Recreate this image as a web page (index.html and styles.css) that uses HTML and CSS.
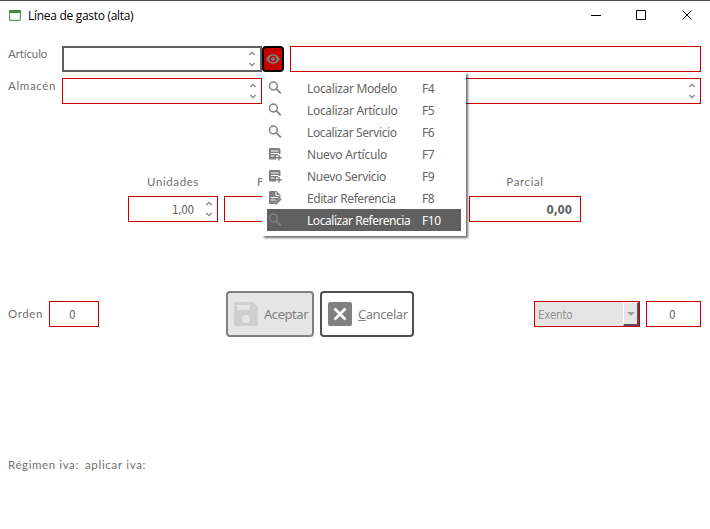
FILE: index.html
```html
<!DOCTYPE html>
<html lang="es">
<head>
<meta charset="utf-8">
<title>Línea de gasto (alta)</title>
<link rel="stylesheet" href="styles.css">
</head>
<body>
<svg class="defs" width="0" height="0">
  <symbol id="search" viewBox="0 0 14 14"><circle cx="5.400" cy="5" r="3.900" fill="none" stroke="currentColor" stroke-width="1.500"/><path d="M8.300 7.900l4.500 4.500" stroke="currentColor" stroke-width="1.800"/></symbol>
  <symbol id="note" viewBox="0 0 14 14"><path fill="currentColor" d="M2 1h9q1.500 0 1.500 1.500V7H10v1.500H8V12.500H2q-1 0-1-1V2q0-1 1-1z"/><path d="M3 4h7.500M3 6.500h7.500M3 9h3.500" stroke="#fff"/><path d="M11 8v5.500M8.200 10.800h5.600" stroke="currentColor" stroke-width="1.500"/></symbol>
  <symbol id="edit" viewBox="0 0 14 14"><path fill="currentColor" d="M2 0h6.500l4 4v2.500L6.500 12.500V13H2q-1 0-1-1V1q0-1 1-1z"/><path d="M8 1v3.500h3.500M3 6.500h7M3 9h4.500" fill="none" stroke="#fff"/><path d="M7.300 13.200l5.700-5.500" stroke="currentColor" stroke-width="2"/></symbol>
  <symbol id="spin" viewBox="0 0 8 18"><path d="M1.300 5L4 2.300 6.700 5M1.300 13L4 15.700 6.700 13" fill="none" stroke="#858585" stroke-width="1.300"/></symbol>
</svg>
<main class="window">
  <header class="titlebar">
    <svg class="app-icon" viewBox="0 0 12 11"><path fill="none" stroke="#388e3c" d="M.7 1v9.300h10.600V1"/><path fill="#388e3c" d="M0 0h12v3H0z"/></svg>
    <h1>Línea de gasto (alta)</h1>
    <svg class="controls" viewBox="0 0 102 12"><path d="M0 5.500h10M45.500 .5h9v9h-9zM91.500 .5l9 9M100.500 .5l-9 9" fill="none" stroke="#000"/></svg>
  </header>
  <section class="line first">
    <label class="t-art">Artículo</label>
    <div class="field code focused"><svg class="spin"><use href="#spin"/></svg></div>
    <button class="eye"><svg viewBox="0 0 14 10"><path fill="#777" fill-rule="evenodd" d="M0 5q2-4.700 7-4.700T14 5q-2 4.700-7 4.700T0 5zm3.700 0a3.300 3.300 0 1 0 6.600 0a3.300 3.300 0 1 0-6.600 0"/><circle cx="7" cy="5" r="2" fill="#777"/></svg></button>
    <div class="field wide"></div>
    <div class="menu">
      <div class="item"><svg><use href="#search"/></svg><span class="m1">Localizar Modelo</span><kbd>F4</kbd></div>
      <div class="item"><svg><use href="#search"/></svg><span class="m2">Localizar Artículo</span><kbd>F5</kbd></div>
      <div class="item"><svg><use href="#search"/></svg><span class="m3">Localizar Servicio</span><kbd>F6</kbd></div>
      <div class="item"><svg><use href="#note"/></svg><span class="m4">Nuevo Artículo</span><kbd>F7</kbd></div>
      <div class="item"><svg><use href="#note"/></svg><span class="m5">Nuevo Servicio</span><kbd>F9</kbd></div>
      <div class="item"><svg><use href="#edit"/></svg><span class="m6">Editar Referencia</span><kbd>F8</kbd></div>
      <div class="item selected"><svg><use href="#search"/></svg><span class="m7">Localizar Referencia</span><kbd>F10</kbd></div>
    </div>
  </section>
  <section class="line">
    <label class="t-alm">Almacén</label>
    <div class="field code"><svg class="spin"><use href="#spin"/></svg></div>
    <div class="field wide after"><svg class="spin"><use href="#spin"/></svg></div>
  </section>
  <section class="amounts">
    <div class="amount units"><label>Unidades</label><div class="field"><span>1,00</span><svg class="spin"><use href="#spin"/></svg></div></div>
    <div class="amount price"><label>F</label><div class="field"></div></div>
    <div class="amount total"><label>Parcial</label><div class="field"><span>0,00</span></div></div>
  </section>
  <section class="actions">
    <label>Orden</label><div class="field order"><span>0</span></div>
    <div class="buttons">
      <button class="accept"><svg viewBox="0 0 24 24"><path fill="#cfcfcf" fill-rule="evenodd" d="M2 0h17l5 5v17q0 2-2 2H2q-2 0-2-2V2q0-2 2-2zm1 3v5h13V3zm9 10a4 4 0 1 0 0 8a4 4 0 1 0 0-8"/></svg><span>Aceptar</span></button>
      <button class="cancel"><svg viewBox="0 0 24 24"><rect width="24" height="24" rx="2" fill="#808080"/><path d="M6.500 6.500l11 11M17.500 6.500l-11 11" stroke="#fff" stroke-width="2.700"/></svg><span><u>C</u>ancelar</span></button>
    </div>
    <div class="field select"><span>Exento</span><i><svg viewBox="0 0 8 4"><path d="M0 0h8L4 4z" fill="#a0a0a0"/></svg></i></div>
    <div class="field rate"><span>0</span></div>
  </section>
  <footer><span class="t-reg">Régimen iva:</span><span class="t-apl">aplicar iva:</span></footer>
</main>
</body>
</html>
```

FILE: styles.css
```css
* { box-sizing: border-box; }
body { margin: 0; background: #fff; color: #666; font: 12px/16px "Noto Sans", sans-serif; }
.defs { position: absolute; }
svg { display: block; flex: none; }
.window { width: 710px; height: 529px; border-top: 1px solid #505050; overflow: hidden; }
.titlebar { display: flex; align-items: center; height: 29px; padding: 0 17px 0 9px; }
.app-icon { width: 12px; height: 11px; margin-right: 7px; }
h1 { margin: 0; padding-top: 1px; font: 12px/16px "Open Sans", sans-serif; color: #000; letter-spacing: -.3px; white-space: nowrap; }
.controls { width: 102px; height: 12px; margin-left: auto; }
label, footer { font: 11.5px/16px "Century Gothic", "Lato", sans-serif; letter-spacing: .6px; white-space: nowrap; color: #707070; }
.t-art { letter-spacing: -.1px; }
.t-alm { letter-spacing: .65px; }
.t-reg { letter-spacing: .6px; }
.t-apl { letter-spacing: .7px; }
.line { display: flex; height: 26px; margin-top: 6px; padding: 0 9px 0 8px; position: relative; }
.line.first { margin-top: 16px; }
.line label { width: 54px; }
.field { display: flex; align-items: center; height: 26px; border: 1px solid #c80000; background: #fff; font: 11.5px/14px "DejaVu Sans Condensed", sans-serif; color: #606060; }
.field span { padding-top: 2px; }
.focused { border: 2px solid #606060; }
.code { width: 200px; }
.spin { width: 8px; height: 18px; margin-left: auto; margin-right: 4px; }
.focused .spin { margin-right: 4px; }
.wide { flex: 1; margin-left: 6px; }
.after { margin-left: 28px; }
.eye { width: 22px; height: 26px; border: 2px solid #000; border-radius: 4px; background: #c80000; padding: 0 2px; }
.eye svg { width: 14px; height: 10px; }
.menu { position: absolute; left: 262px; top: 26px; width: 204px; height: 164px; padding: 5px; background: #fff; box-shadow: 2px 2px 2px rgba(0,0,0,.55); z-index: 1; }
.item { display: grid; grid-template-columns: 40px 115px 1fr; align-items: center; height: 22px; white-space: nowrap; color: #666; }
.item svg { width: 14px; height: 14px; margin-left: 1px; color: #808080; }
.item span, .item kbd { padding-top: 2px; }
.item kbd { font: inherit; letter-spacing: -.4px; }
.m1, .m2 { letter-spacing: -.33px; }
.m3 { letter-spacing: -.37px; }
.m4 { letter-spacing: -.22px; }
.m5 { letter-spacing: -.3px; }
.m6 { letter-spacing: -.43px; }
.m7 { letter-spacing: -.45px; }
.selected { background: #606060; color: #fff; }
.amounts { display: flex; height: 48px; margin: 70px 0 0 128px; }
.amount { display: flex; flex-direction: column; }
.amount label { height: 22px; text-align: center; }
.units { width: 90px; }
.units .field { padding-left: 43px; letter-spacing: -.3px; }
.price { width: 112px; margin-left: 6px; }
.price .field { width: 112px; }
.amount.price label { text-align: left; padding-left: 33px; }
.total { width: 112px; margin-left: 133px; }
.total .field { justify-content: flex-end; padding-right: 8px; font-weight: bold; font-family: "DejaVu Sans Condensed", sans-serif; }
.actions { display: flex; align-items: center; height: 46px; margin-top: 69px; padding: 0 9px 0 8px; }
.actions label { width: 41px; }
.order { width: 50px; padding-left: 19px; }
.buttons { display: flex; gap: 6px; margin-left: 127px; }
.buttons button { display: flex; align-items: center; height: 46px; padding: 0 0 0 6px; border: 2px solid #808080; border-radius: 4px; font: 13px/18px "Noto Sans", sans-serif; letter-spacing: -.45px; color: #808080; background: #e5e5e5; }
.buttons svg { width: 24px; height: 24px; margin-right: 6px; }
.accept { width: 88px; }
.buttons .cancel { width: 94px; border-color: #505050; background: #fff; }
.select { width: 106px; margin-left: 120px; padding-left: 3px; background: #e5e5e5; color: #929292; letter-spacing: -.2px; }
.select i { display: grid; place-items: center; width: 16px; height: 24px; margin-left: auto; border: 1px solid #fff; border-right: 2px solid #505050; border-bottom: 2px solid #505050; }
.select i svg { width: 8px; height: 4px; }
.rate { width: 55px; margin-left: 6px; padding-left: 22px; }
footer { display: flex; gap: 6px; margin: 120px 0 0 8px; }
```
